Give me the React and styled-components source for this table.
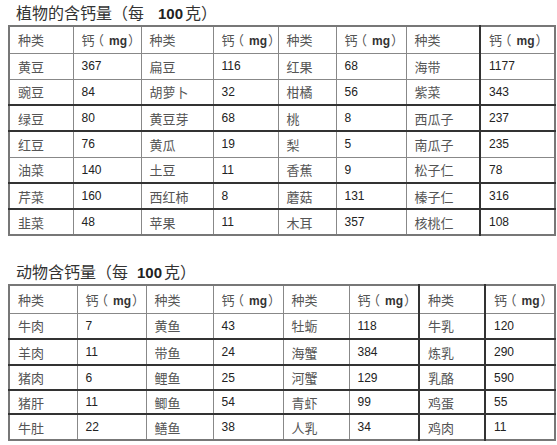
import React from 'react';
import styled, { createGlobalStyle } from 'styled-components';

const GlobalStyle = createGlobalStyle`
    body {
        margin: 0;
        background: #ffffff;
        font-family: "Liberation Sans", "Noto Sans CJK SC", sans-serif;
    }
`;

const Page = styled.div`
    width: 557px;
    padding: 0 3px 0 8px;
    box-sizing: border-box;
`;

const Title = styled.h2`
    margin: ${(p) => p.$top}px 0 0 8px;
    height: ${(p) => p.$height}px;
    font-size: 16px;
    font-weight: 400;
    color: #333;
    line-height: 20px;
    font-family: "Noto Sans CJK SC", sans-serif;

    b {
        font-family: "Liberation Sans", sans-serif;
        font-weight: 700;
        font-size: 15px;
        color: #222;
        margin-left: ${(p) => p.$gap}px;
        margin-right: 2px;
    }
`;

const Table = styled.table`
    width: 546px;
    border-collapse: collapse;
    table-layout: fixed;
    border: 2px solid #777;
`;

const Row = styled.tr`
    height: ${(p) => p.$h || 26}px;
    border-bottom: ${(p) => (p.$dark ? '2px solid #333' : '1px solid #888')};
`;

const Cell = styled.td`
    padding: 0 0 0 8px;
    border-right: ${(p) => (p.$dark ? '2px solid #333' : '1px solid #888')};
    font-size: ${(p) => (p.$num ? 12 : 13)}px;
    vertical-align: middle;
    white-space: nowrap;
    overflow: hidden;
    color: ${(p) => (p.$num ? '#222' : '#555')};
    font-family: ${(p) =>
        p.$num ? '"Liberation Sans", sans-serif' : '"Noto Sans CJK SC", sans-serif'};
    font-feature-settings: "halt";

    b {
        font-family: "Liberation Sans", sans-serif;
        font-size: 12px;
        font-weight: 700;
        color: #333;
        margin: 0 1px 0 5px;
    }
`;

const Paren = styled.span`
    margin-left: 3px;
`;

const plantCols = [64, 68, 72, 65, 58, 70, 74, 75];
const animalCols = [68, 69, 67, 70, 66, 70, 66, 70];

const plantRows = [
    { items: [['黄豆', '367'], ['扁豆', '116'], ['红果', '68'], ['海带', '1177']] },
    { items: [['豌豆', '84'], ['胡萝卜', '32'], ['柑橘', '56'], ['紫菜', '343']], dark: true },
    { items: [['绿豆', '80'], ['黄豆芽', '68'], ['桃', '8'], ['西瓜子', '237']], dark: true },
    { items: [['红豆', '76'], ['黄瓜', '19'], ['梨', '5'], ['南瓜子', '235']] },
    { items: [['油菜', '140'], ['土豆', '11'], ['香蕉', '9'], ['松子仁', '78']], dark: true },
    { items: [['芹菜', '160'], ['西红柿', '8'], ['蘑菇', '131'], ['榛子仁', '316']], dark: true },
    { items: [['韭菜', '48'], ['苹果', '11'], ['木耳', '357'], ['核桃仁', '108']] },
];

const animalRows = [
    { items: [['牛肉', '7'], ['黄鱼', '43'], ['牡蛎', '118'], ['牛乳', '120']], dark: true },
    { items: [['羊肉', '11'], ['带鱼', '24'], ['海蟹', '384'], ['炼乳', '290']], dark: true, h: 26 },
    { items: [['猪肉', '6'], ['鲤鱼', '25'], ['河蟹', '129'], ['乳酪', '590']], dark: true, h: 25 },
    { items: [['猪肝', '11'], ['鲫鱼', '54'], ['青虾', '99'], ['鸡蛋', '55']], dark: true, h: 24 },
    { items: [['牛肚', '22'], ['鳝鱼', '38'], ['人乳', '34'], ['鸡肉', '11']], h: 26 },
];

const CalciumTable = ({ cols, rows, darkCols, headH }) => (
    <Table>
        <colgroup>
            {cols.map((w, i) => (
                <col key={i} style={{ width: w }} />
            ))}
        </colgroup>
        <tbody>
            <Row $h={headH}>
                {[0, 1, 2, 3].map((i) => (
                    <React.Fragment key={i}>
                        <Cell $dark={darkCols.includes(i * 2)}>种类</Cell>
                        <Cell $dark={darkCols.includes(i * 2 + 1)}>
                            钙<Paren>（</Paren><b>mg</b>）
                        </Cell>
                    </React.Fragment>
                ))}
            </Row>
            {rows.map((row, r) => (
                <Row key={r} $dark={row.dark} $h={row.h}>
                    {row.items.map(([name, val], i) => (
                        <React.Fragment key={i}>
                            <Cell $dark={darkCols.includes(i * 2)}>{name}</Cell>
                            <Cell $num $dark={darkCols.includes(i * 2 + 1)}>{val}</Cell>
                        </React.Fragment>
                    ))}
                </Row>
            ))}
        </tbody>
    </Table>
);

const App = () => (
    <Page>
        <GlobalStyle />
        <Title $top={2} $height={23} $gap={14}>
            植物的含钙量（每<b>100</b>克）
        </Title>
        <CalciumTable cols={plantCols} rows={plantRows} darkCols={[6]} headH={27} />
        <Title $top={25} $height={23} $gap={9}>
            动物含钙量（每<b>100</b>克）
        </Title>
        <CalciumTable cols={animalCols} rows={animalRows} darkCols={[5, 6]} headH={28} />
    </Page>
);

export default App;
